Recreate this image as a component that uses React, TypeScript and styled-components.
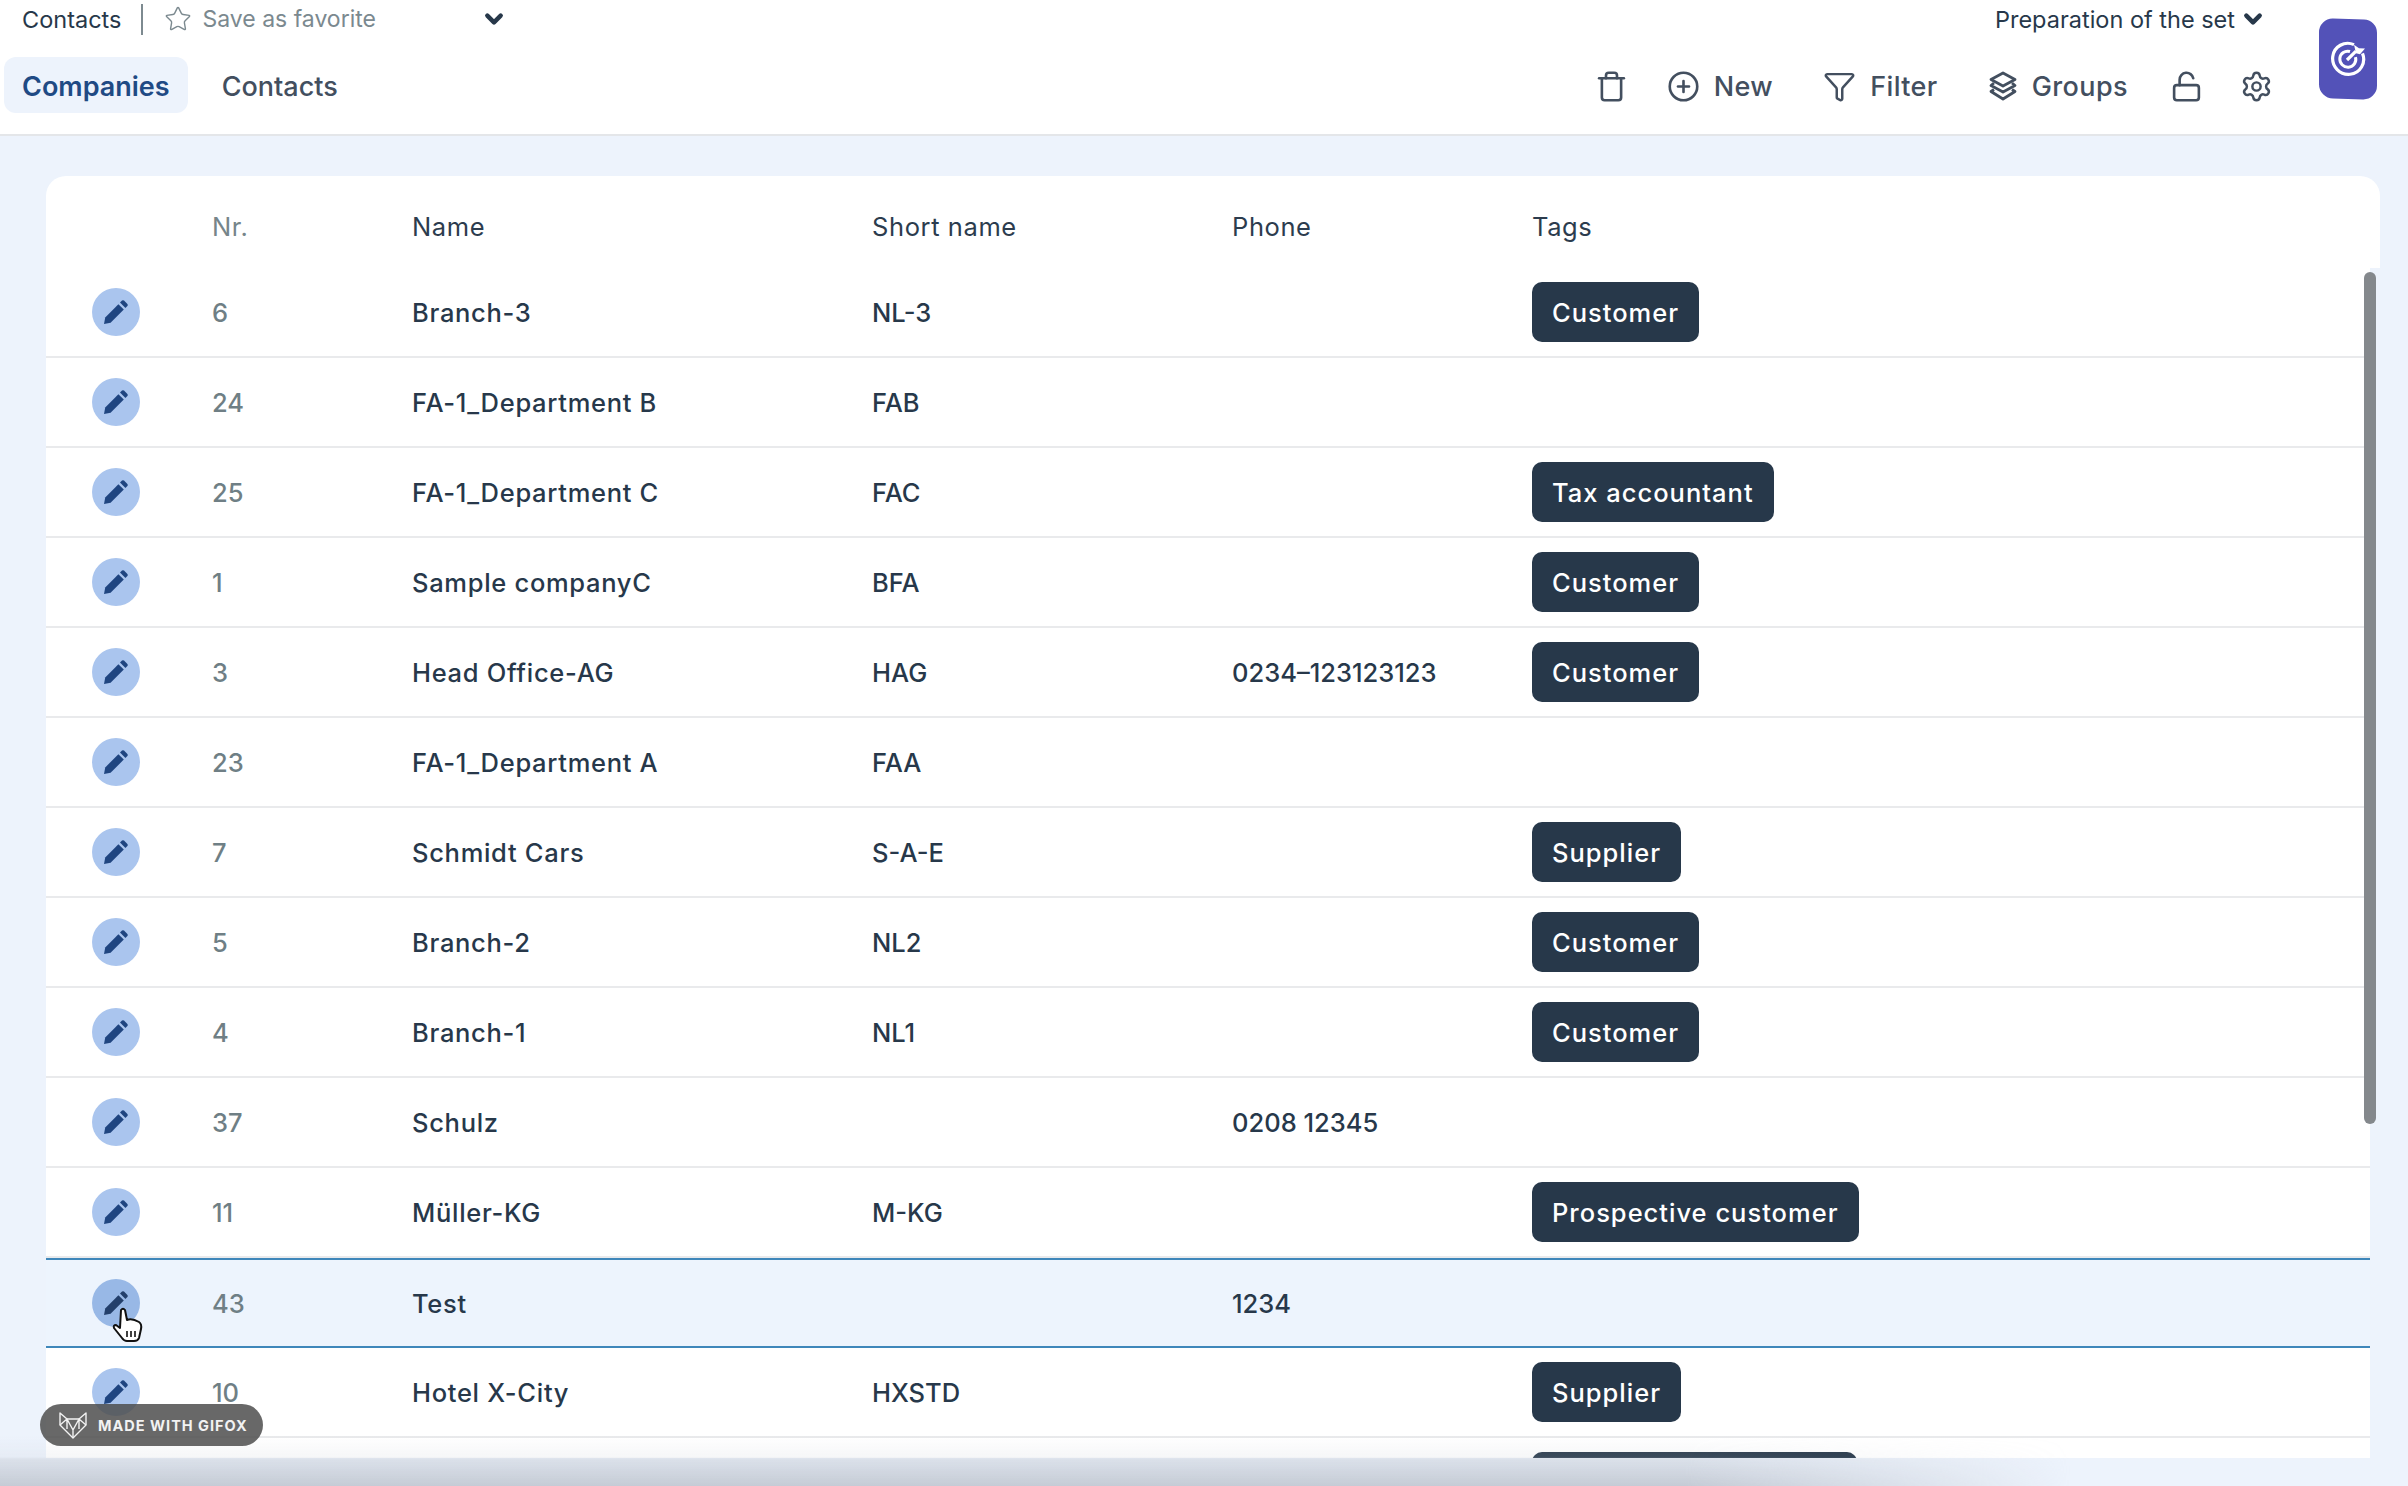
import React from "react";
import styled, { createGlobalStyle } from "styled-components";
import { Trash, CirclePlus, Funnel, LockOpen, Settings, Star } from "lucide-react";

const Global = createGlobalStyle`
  html, body { margin: 0; padding: 0; background: #edf3fc; }
  body { font-family: "Inter", "Liberation Sans", sans-serif; }
  * { box-sizing: border-box; }
`;

const Page = styled.div`
  position: relative;
  width: 2408px;
  height: 1486px;
  overflow: hidden;
  background: #edf3fc;
`;

const Header = styled.header`
  height: 136px;
  background: #fff;
  border-bottom: 2px solid #e4e6e9;
`;

const TopBar = styled.div`
  height: 38px;
  display: flex;
  align-items: center;
  padding: 0 145px 0 22px;
`;

const Breadcrumb = styled.span`
  font-size: 23.5px;
  color: #27384a;
  padding-right: 20px;
  border-right: 2px solid #7d8a90;
  line-height: 31px;
`;

const Favorite = styled.span`
  display: flex;
  align-items: center;
  gap: 10px;
  width: 341px;
  padding-left: 21px;
  font-size: 23px;
  color: #7b898f;
`;

const SetName = styled.span`
  display: flex;
  align-items: center;
  gap: 8px;
  margin-left: auto;
  font-size: 23.5px;
  color: #27384a;
`;

const NavBar = styled.div`
  height: 75px;
  padding: 19px 135px 0 4px;
  display: flex;
  align-items: flex-start;
`;

const Tab = styled.button<{ $active?: boolean }>`
  height: 56px;
  padding: 2px 18px 0;
  margin-right: 16px;
  border: 0;
  border-radius: 12px;
  font: ${(p) => (p.$active ? 600 : 500)} 27px "Inter", sans-serif;
  color: ${(p) => (p.$active ? "#1f4a84" : "#434f5f")};
  background: ${(p) => (p.$active ? "#edf3fc" : "transparent")};
`;

const Toolbar = styled.div`
  margin-left: auto;
  height: 58px;
  display: flex;
  align-items: center;
  color: #434f5f;
`;

const ToolButton = styled.span<{ $gap: number }>`
  display: flex;
  align-items: center;
  gap: 14px;
  margin-left: ${(p) => p.$gap}px;
  font-size: 27px;
  font-weight: 500;
  letter-spacing: 0.4px;
`;

const LogoBadge = styled.div`
  position: absolute;
  left: 2319px;
  top: 19px;
  width: 58px;
  height: 80px;
  display: flex;
  align-items: center;
  justify-content: center;
  background: #5352b8;
  border-radius: 14px 13px 14px 14px;
  transform: skewY(1.5deg);
`;

const Card = styled.main`
  position: absolute;
  left: 46px;
  top: 176px;
  width: 2334px;
  height: 1282px;
  overflow: hidden;
  border-radius: 20px 20px 0 0;
`;

const columns = "166px 200px 460px 360px 300px 1fr";

const HeadRow = styled.div`
  display: grid;
  grid-template-columns: ${columns};
  align-items: center;
  height: 92px;
  padding-top: 9px;
  background: #fff;
  font-size: 25.5px;
  letter-spacing: 0.6px;
  color: #2c3c4e;
`;

const HeadMuted = styled.span`
  color: #76858a;
`;

const Body = styled.div`
  width: 2324px;
  background: #fff;
`;

const Row = styled.div<{ $selected?: boolean }>`
  display: grid;
  grid-template-columns: ${columns};
  align-items: center;
  height: 90px;
  font-size: 25.5px;
  font-weight: 500;
  color: #27384a;
  background: ${(p) => (p.$selected ? "#edf4fd" : "#fff")};
  border-top: ${(p) => (p.$selected ? "2px solid #3f87ba" : "0")};
  border-bottom: 2px solid ${(p) => (p.$selected ? "#3f87ba" : "#e9eaec")};
`;

const EditCircle = styled.span<{ $selected?: boolean }>`
  width: 48px;
  height: 48px;
  margin-left: 46px;
  border-radius: 50%;
  display: flex;
  align-items: center;
  justify-content: center;
  background: ${(p) => (p.$selected ? "#98b8e6" : "#aac5ee")};
  color: ${(p) => (p.$selected ? "#233f6b" : "#1f4580")};
`;

const Num = styled.span`
  color: #6f7f85;
`;

const NameCell = styled.span`
  letter-spacing: 0.7px;
`;

const Tag = styled.span<{ $minWidth?: number }>`
  display: inline-flex;
  align-items: center;
  height: 60px;
  min-width: ${(p) => p.$minWidth ?? 0}px;
  padding: 0 20px;
  border-radius: 10px;
  background: #27384a;
  color: #fff;
  font-size: 25.5px;
  font-weight: 500;
  letter-spacing: 1px;
`;

const TagCell = styled.div`
  display: flex;
`;

const ScrollThumb = styled.div`
  position: absolute;
  left: 2364px;
  top: 272px;
  width: 12px;
  height: 852px;
  border-radius: 6px;
  background: #84888c;
`;

const BottomShade = styled.div`
  position: absolute;
  left: 0;
  right: 0;
  bottom: 0;
  height: 50px;
  background: linear-gradient(
    to bottom,
    rgba(190, 196, 206, 0),
    rgba(190, 196, 206, 0.14) 42%,
    rgba(190, 196, 206, 0.38) 46%,
    rgba(190, 196, 206, 0.85)
  );
  mask-image: linear-gradient(to right, #000 70%, transparent 86%);
`;

const Gifox = styled.div`
  position: absolute;
  left: 40px;
  top: 1404px;
  width: 223px;
  height: 42px;
  padding-left: 18px;
  display: flex;
  align-items: center;
  gap: 10px;
  border-radius: 21px;
  background: rgba(78, 78, 78, 0.85);
  color: #f2f2f2;
  font: 700 14.5px "Inter", sans-serif;
  letter-spacing: 1px;
  white-space: nowrap;
`;

const CursorMark = styled.svg`
  position: absolute;
  left: 112px;
  top: 1307px;
`;

const Pencil = () => (
  <svg width="26" height="26" viewBox="0 0 26 26" fill="currentColor">
    <path d="M1 25 L2.2 18.4 L15.4 5.2 L20.8 10.6 L7.6 23.8 Z" />
    <path d="M17 3.6 L19 1.6 Q20 0.7 21 1.6 L24.4 5 Q25.3 6 24.4 7 L22.4 9 Z" />
  </svg>
);

const Chevron = ({ size }: { size: number }) => (
  <svg width={size} height={size} viewBox="0 0 18 18" fill="none" stroke="#27384a" strokeWidth="4" strokeLinecap="round" strokeLinejoin="round">
    <path d="M3 6 L9 12 L15 6" />
  </svg>
);

const GroupsIcon = () => (
  <svg width="30" height="30" viewBox="0 0 30 30" fill="none" stroke="currentColor" strokeWidth="2.8" strokeLinejoin="round">
    <path d="M15 2 L27 8.5 L15 15 L3 8.5 Z" />
    <path d="M6 12 L3 14.5 L15 21 L27 14.5 L24 12" />
    <path d="M6 18.5 L3 20.5 L15 28 L27 20.5 L24 18.5" />
  </svg>
);

const TargetIcon = () => (
  <svg width="38" height="38" viewBox="0 0 38 38" fill="none" stroke="#fff">
    <path d="M25 4.5 A15.5 15.5 0 1 0 33.5 13" strokeWidth="3.2" />
    <path d="M21 11.5 A8 8 0 1 0 26.5 17" strokeWidth="3" />
    <path d="M18 20 L27 11" strokeWidth="3.2" />
    <path d="M25 4.5 L30 8 L36 8 L31 14 L27 13 Z" fill="#fff" stroke="none" />
  </svg>
);

const FoxIcon = () => (
  <svg width="30" height="30" viewBox="0 0 30 30" fill="none" stroke="#f2f2f2" strokeWidth="1.4" strokeLinejoin="round">
    <path d="M2 3 L9 9 L21 9 L28 3 L28 15 L15 28 L2 15 Z" />
    <path d="M2 15 L9 9 L15 20 L21 9 L28 15 M15 20 L15 28 M9 9 L9 19 M21 9 L21 19" />
  </svg>
);

type Item = { nr: string; name: string; short: string; phone: string; tag: string; selected?: boolean };

const rows: Item[] = [
  { nr: "6", name: "Branch-3", short: "NL-3", phone: "", tag: "Customer" },
  { nr: "24", name: "FA-1_Department B", short: "FAB", phone: "", tag: "" },
  { nr: "25", name: "FA-1_Department C", short: "FAC", phone: "", tag: "Tax accountant" },
  { nr: "1", name: "Sample companyC", short: "BFA", phone: "", tag: "Customer" },
  { nr: "3", name: "Head Office-AG", short: "HAG", phone: "0234–123123123", tag: "Customer" },
  { nr: "23", name: "FA-1_Department A", short: "FAA", phone: "", tag: "" },
  { nr: "7", name: "Schmidt Cars", short: "S-A-E", phone: "", tag: "Supplier" },
  { nr: "5", name: "Branch-2", short: "NL2", phone: "", tag: "Customer" },
  { nr: "4", name: "Branch-1", short: "NL1", phone: "", tag: "Customer" },
  { nr: "37", name: "Schulz", short: "", phone: "0208 12345", tag: "" },
  { nr: "11", name: "Müller-KG", short: "M-KG", phone: "", tag: "Prospective customer" },
  { nr: "43", name: "Test", short: "", phone: "1234", tag: "", selected: true },
  { nr: "10", name: "Hotel X-City", short: "HXSTD", phone: "", tag: "Supplier" },
];

export default function App() {
  return (
    <Page>
      <Global />
      <Header>
        <TopBar>
          <Breadcrumb>Contacts</Breadcrumb>
          <Favorite>
            <Star size={28} strokeWidth={1.2} color="#7b898f" />
            Save as favorite
          </Favorite>
          <Chevron size={20} />
          <SetName>
            Preparation of the set
            <Chevron size={20} />
          </SetName>
        </TopBar>
        <NavBar>
          <Tab $active>Companies</Tab>
          <Tab>Contacts</Tab>
          <Toolbar>
            <ToolButton $gap={0}>
              <Trash size={33} strokeWidth={1.9} />
            </ToolButton>
            <ToolButton $gap={39}>
              <CirclePlus size={33} strokeWidth={1.9} />
              New
            </ToolButton>
            <ToolButton $gap={50}>
              <Funnel size={33} strokeWidth={1.8} />
              Filter
            </ToolButton>
            <ToolButton $gap={50}>
              <GroupsIcon />
              Groups
            </ToolButton>
            <ToolButton $gap={42}>
              <LockOpen size={33} strokeWidth={1.9} />
            </ToolButton>
            <ToolButton $gap={37}>
              <Settings size={33} strokeWidth={1.8} />
            </ToolButton>
          </Toolbar>
        </NavBar>
      </Header>
      <LogoBadge>
        <TargetIcon />
      </LogoBadge>
      <Card>
        <HeadRow>
          <span />
          <HeadMuted>Nr.</HeadMuted>
          <span>Name</span>
          <span>Short name</span>
          <span>Phone</span>
          <span>Tags</span>
        </HeadRow>
        <Body>
          {rows.map((r, i) => (
            <Row key={i} $selected={r.selected}>
              <EditCircle $selected={r.selected}>
                <Pencil />
              </EditCircle>
              <Num>{r.nr}</Num>
              <NameCell>{r.name}</NameCell>
              <span>{r.short}</span>
              <span>{r.phone}</span>
              <TagCell>{r.tag && <Tag>{r.tag}</Tag>}</TagCell>
            </Row>
          ))}
          <Row>
            <span />
            <span />
            <span />
            <span />
            <span />
            <TagCell>
              <Tag $minWidth={325} />
            </TagCell>
          </Row>
        </Body>
      </Card>
      <ScrollThumb />
      <BottomShade />
      <CursorMark width="32" height="36" viewBox="0 0 32 36">
        <path
          d="M9 3 Q11 0.5 13 3 L15 13 Q20 11 27 15 Q30 17 29 22 L27 31 Q26 34 22 34 L15 34 Q12 34 10 31 L2 21 Q1 18 4 18 L8 21 Z"
          fill="#fff"
          stroke="#111"
          strokeWidth="2"
          strokeLinejoin="round"
        />
        <path d="M15 24 V30 M19 24 V30 M23 24 V30" stroke="#111" strokeWidth="1.6" />
      </CursorMark>
      <Gifox>
        <FoxIcon />
        MADE WITH GIFOX
      </Gifox>
    </Page>
  );
}
